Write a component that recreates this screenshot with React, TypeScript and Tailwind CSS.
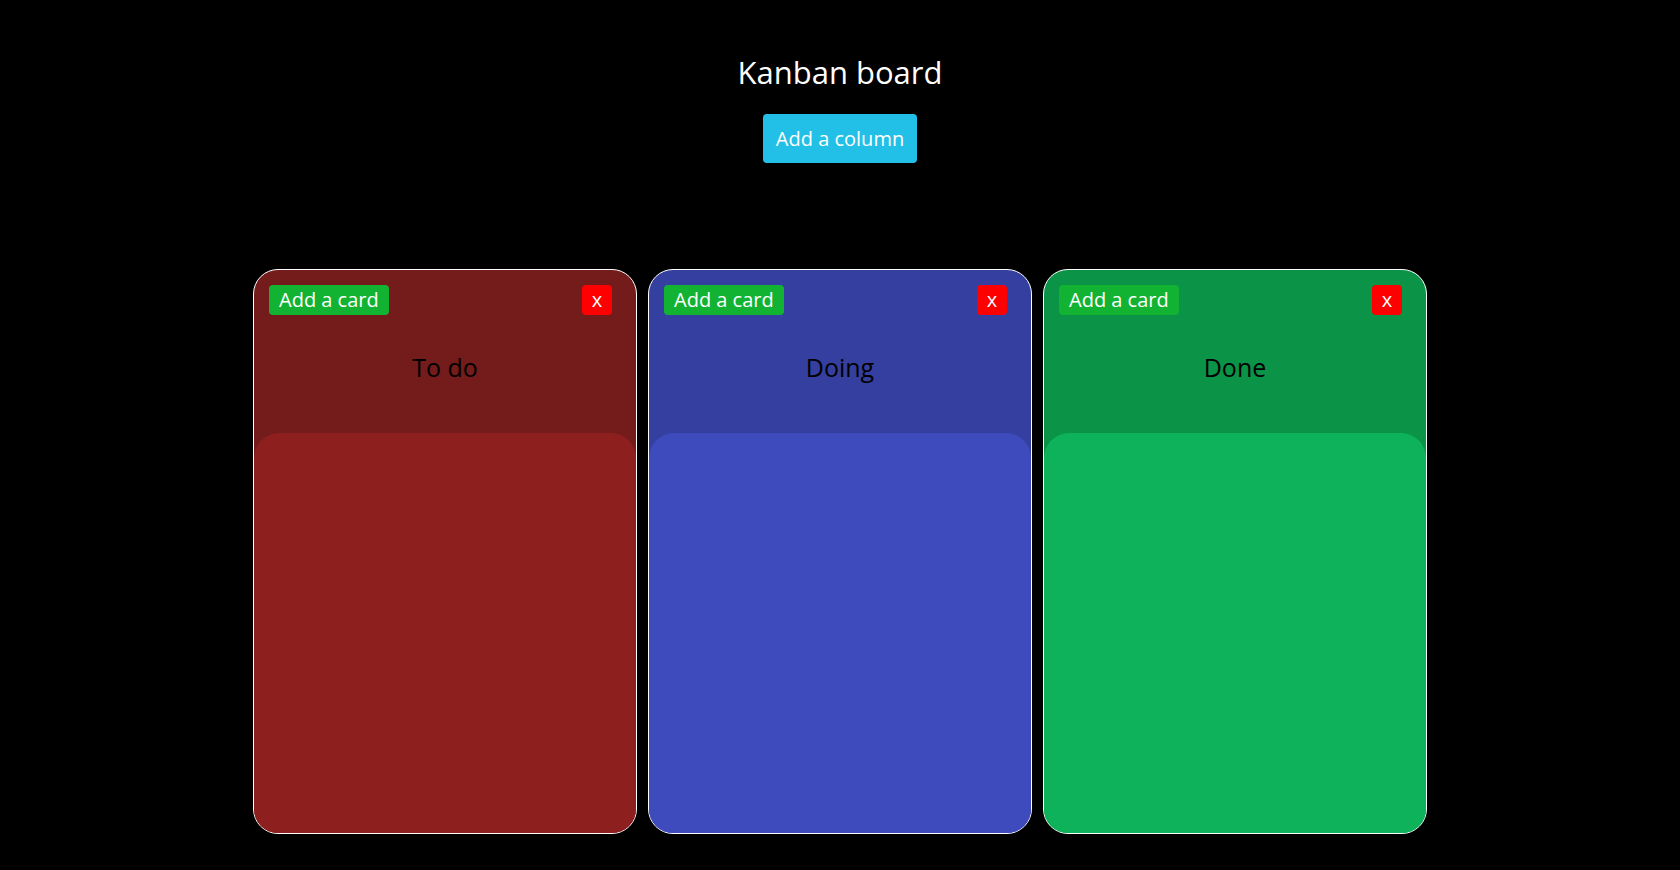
import React from "react";

const columns = [
  { title: "To do", head: "bg-[#741b1b]", body: "bg-[#8e1f1f]" },
  { title: "Doing", head: "bg-[#353f9f]", body: "bg-[#3e4bbc]" },
  { title: "Done", head: "bg-[#0b9347]", body: "bg-[#0db25a]" },
];

export default function App() {
  return (
    <div className="min-h-[870px] w-full bg-black font-['Open_Sans',sans-serif] text-white">
      <div className="flex flex-col items-center pt-[49px]">
        <h1 className="text-[31px] leading-[46px] font-normal">Kanban board</h1>
        <button className="mt-[19px] h-[49px] rounded-[4px] bg-[#22bfe7] px-[13px] text-[20px] text-white">
          Add a column
        </button>
        <div className="mt-[106px] flex gap-[11px]">
          {columns.map((c) => (
            <div
              key={c.title}
              className={`flex h-[565px] w-[384px] flex-col overflow-hidden rounded-[25px] border border-white ${c.head}`}
            >
              <div className="h-[163px] px-[15px] pt-[15px]">
                <div className="flex items-center justify-between pr-[9px]">
                  <button className="h-[30px] rounded-[4px] bg-[#12b332] px-[10px] text-[20px] leading-[30px] text-white">
                    Add a card
                  </button>
                  <button className="h-[30px] w-[30px] rounded-[4px] bg-[#ff0000] text-[20px] leading-[30px] text-white">
                    x
                  </button>
                </div>
                <div className="mt-[32px] text-center text-[25px] font-normal leading-[40px] text-black">
                  {c.title}
                </div>
              </div>
              <div className={`flex-1 rounded-t-[25px] ${c.body}`} />
            </div>
          ))}
        </div>
      </div>
    </div>
  );
}
